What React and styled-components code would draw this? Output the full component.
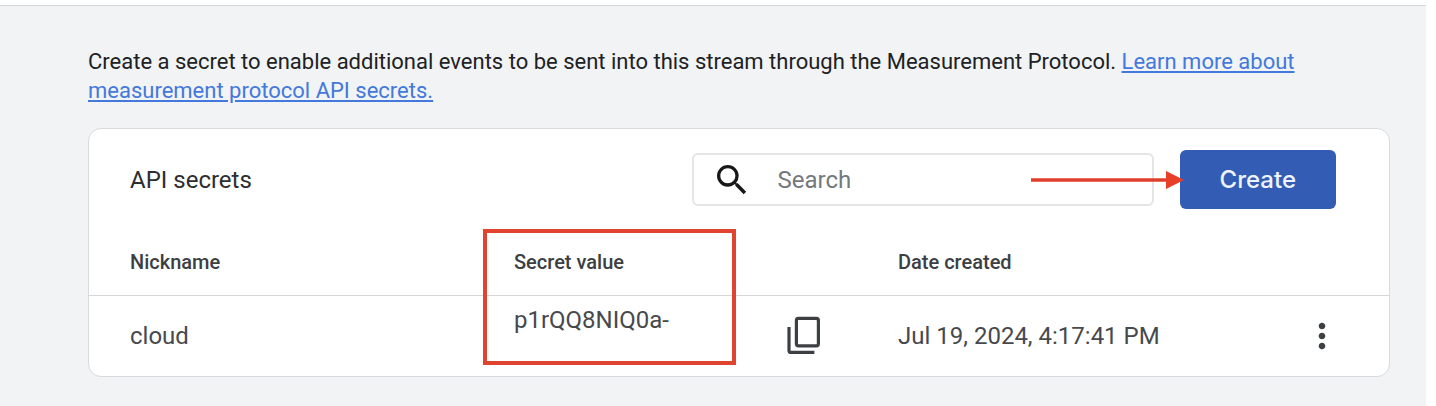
import React, { useState } from 'react';
import styled, { createGlobalStyle } from 'styled-components';
import { MdSearch, MdMoreVert } from 'react-icons/md';

const secrets = [
  { nickname: 'cloud', value: 'p1rQQ8NIQ0a-', created: 'Jul 19, 2024, 4:17:41 PM' },
];

function CopyIcon() {
  return (
    <svg width='34' height='40' viewBox='0 0 34 40' fill='none' stroke='currentColor' strokeWidth='3.2'>
      <rect x='9.4' y='2.4' width='22' height='27.4' rx='2' />
      <path d='M2 11V34.4a2 2 0 0 0 2 2H27.4' />
    </svg>
  );
}

function Arrow() {
  return (
    <ArrowSvg width='153' height='20' viewBox='0 0 153 20' aria-hidden='true'>
      <path d='M0 10H138' stroke='#e03e2c' strokeWidth='3.4' />
      <path d='M135 1L153 10L135 19Z' fill='#e93f28' />
    </ArrowSvg>
  );
}

function App() {
  const [search, setSearch] = useState('');
  const rows = secrets.filter((s) => s.nickname.includes(search.toLowerCase()));

  return (
    <Page>
      <GlobalStyle />
      <Intro>
        Create a secret to enable additional events to be sent into this stream through the
        Measurement Protocol. <a href='#learn'>Learn more about measurement protocol API secrets.</a>
      </Intro>
      <Card>
        <Toolbar>
          <Title>API secrets</Title>
          <SearchBox>
            <MdSearch size={40} />
            <input
              type='text'
              aria-label='Search'
              placeholder='Search'
              value={search}
              onChange={(e) => setSearch(e.target.value)}
            />
          </SearchBox>
          <CreateWrap>
            <CreateButton type='button'>Create</CreateButton>
            <Arrow />
          </CreateWrap>
        </Toolbar>
        <Table>
          <thead>
            <HeadRow>
              <th>Nickname</th>
              <th>
                Secret value
                <Highlight />
              </th>
              <th>Date created</th>
            </HeadRow>
          </thead>
          <tbody>
            {rows.map((s) => (
              <BodyRow key={s.nickname}>
                <td>{s.nickname}</td>
                <SecretCell>
                  <SecretValue>{s.value}</SecretValue>
                  <IconButton type='button' aria-label='Copy secret value'>
                    <CopyIcon />
                  </IconButton>
                </SecretCell>
                <td>{s.created}</td>
                <MenuCell>
                  <IconButton type='button' aria-label='More options'>
                    <MdMoreVert size={40} />
                  </IconButton>
                </MenuCell>
              </BodyRow>
            ))}
          </tbody>
        </Table>
      </Card>
    </Page>
  );
}

export default App;

const GlobalStyle = createGlobalStyle`
  * {
    box-sizing: border-box;
  }
  body {
    margin: 0;
    background-color: white;
    font-family: Roboto, "Liberation Sans", sans-serif;
  }
`

const Page = styled.div`
  min-height: calc(100vh - 5px);
  margin: 5px 10px 0 0;
  padding: 41px 36px 28px 88px;
  border-top: 1px solid #d4d6d8;
  background-color: #f1f3f4;
`

const Intro = styled.p`
  margin: 0 0 23px;
  padding-right: 72px;
  font-size: 22px;
  line-height: 29px;
  color: #202124;

  a {
    color: #4378dc;
    text-decoration: underline;
  }
`

const Card = styled.section`
  border: 1px solid #d8dadd;
  border-radius: 13px;
  background-color: white;
`

const Toolbar = styled.div`
  display: flex;
  align-items: center;
  padding: 21px 53px 20px 41px;
`

const Title = styled.h2`
  flex: 1;
  margin: 0;
  font-size: 24px;
  font-weight: 400;
  color: #2d2e31;
`

const SearchBox = styled.label`
  display: flex;
  flex: 0 1 462px;
  align-items: center;
  gap: 26px;
  min-width: 0;
  height: 53px;
  padding: 0 18px;
  border: 2px solid #e4e5e7;
  border-radius: 6px;
  color: #17181a;

  svg {
    flex: none;
  }
  input {
    flex: 1;
    min-width: 0;
    padding: 0;
    border: 0;
    outline: none;
    background: none;
    font-family: inherit;
    font-size: 24px;
    color: #202124;
  }
  input::placeholder {
    color: #75787c;
    opacity: 1;
  }
`

const CreateWrap = styled.div`
  position: relative;
  margin-left: 26px;
`

const CreateButton = styled.button`
  display: block;
  height: 59px;
  padding: 0 40px;
  border: 0;
  border-radius: 6px;
  background-color: #335cb4;
  font-family: Inter, "Liberation Sans", sans-serif;
  font-size: 24px;
  font-weight: 500;
  color: #eef3fd;
  cursor: pointer;
`

const ArrowSvg = styled.svg`
  position: absolute;
  top: 20px;
  right: calc(100% - 4px);
  pointer-events: none;
`

const Table = styled.table`
  display: block;
  width: 100%;

  thead,
  tbody {
    display: block;
  }
`

const Row = styled.tr`
  display: grid;
  grid-template-columns: repeat(3, 1fr) 80px;
  align-items: center;
  padding: 0 27px 0 41px;

  th,
  td {
    padding: 0;
    text-align: left;
  }
`

const HeadRow = styled(Row)`
  height: 67px;
  border-bottom: 1px solid #d4d6d8;
  font-size: 20px;
  line-height: 24px;
  color: #3c4043;

  th {
    position: relative;
    font-weight: 500;
  }
`

const BodyRow = styled(Row)`
  min-height: 80px;
  font-size: 24px;
  line-height: 32px;
  color: #47494d;
`

const SecretCell = styled.td`
  display: flex;
  align-items: center;
`

const SecretValue = styled.span`
  flex: 0 0 273px;
  min-height: 64px;
`

const MenuCell = styled.td`
  display: flex;
  justify-content: center;
`

const IconButton = styled.button`
  display: flex;
  padding: 0;
  border: 0;
  background: none;
  color: #3c4043;
  cursor: pointer;
`

const Highlight = styled.div`
  position: absolute;
  top: -21px;
  left: -31px;
  width: 253px;
  height: 136px;
  border: 4px solid #e0432f;
  pointer-events: none;
`
